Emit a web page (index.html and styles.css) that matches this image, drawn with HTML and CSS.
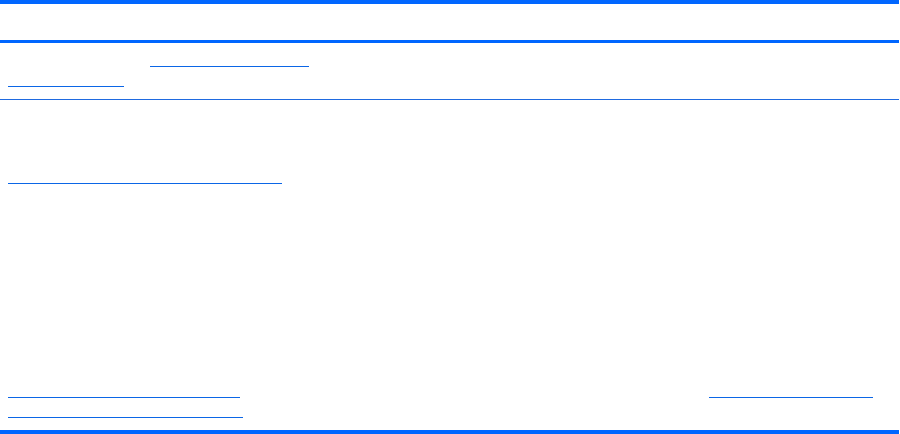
FILE: index.html
```html
<!DOCTYPE html>
<html>
<head>
<meta charset="utf-8">
<link rel="stylesheet" href="styles.css">
</head>
<body>
<div class="table">
  <div class="head"></div>
  <div class="row first">
    <div class="line"><span class="u u-a"></span></div>
    <div class="line"><span class="u u-b"></span></div>
  </div>
  <div class="row body">
    <div class="line l-top"><span class="u u-c"></span></div>
    <div class="line l-mid"><span class="u u-d"></span><span class="u u-e"></span></div>
    <div class="line"><span class="u u-f"></span></div>
  </div>
</div>
</body>
</html>
```
FILE: styles.css
```css
html, body {
  margin: 0;
  padding: 0;
  background: #ffffff;
  font-family: "Liberation Sans", Arial, sans-serif;
}
.table {
  width: 899px;
  display: flex;
  flex-direction: column;
}
.head {
  height: 36px;
  border-top: 4px solid #0066ff;
  border-bottom: 3px solid #0066ff;
}
.row {
  display: flex;
  flex-direction: column;
  padding-left: 8px;
}
.first {
  padding-top: 4px;
  padding-bottom: 12px;
  border-bottom: 1px solid #1f6ae0;
}
.body {
  padding-top: 64px;
  padding-bottom: 12px;
  border-bottom: 4px solid #0066ff;
}
.line {
  height: 20px;
  display: flex;
  align-items: flex-end;
}
.l-mid {
  margin-top: 194px;
}
.u {
  display: block;
  height: 1px;
  background: #0b66e6;
}
.u-a { margin-left: 142px; width: 159px; }
.u-b { width: 116px; }
.u-c { width: 274px; }
.u-d { width: 232px; }
.u-e { margin-left: 469px; width: 164px; }
.u-f { width: 235px; }
```
